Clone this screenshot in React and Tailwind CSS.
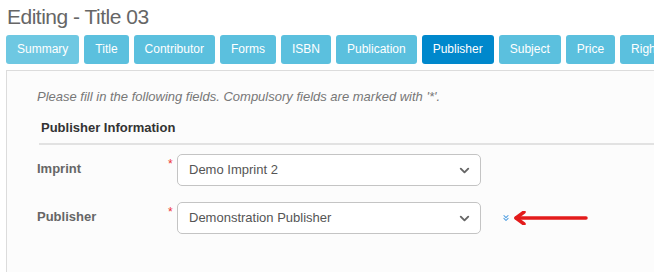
import { ChevronDown, ChevronsDown } from "lucide-react";

const tabs = ["Summary", "Title", "Contributor", "Forms", "ISBN", "Publication", "Publisher", "Subject", "Price", "Rights"];

function Field({ label, value, extra }) {
    return (
        <div className="flex items-start h-[48px]">
            <div className="w-[131px] pt-[6px] text-[13px] font-bold text-[#666] leading-[18px]">{label}</div>
            <div className="w-[9px] text-[12px] text-[#e33] leading-none pt-[4px]">*</div>
            <div className="relative w-[304px] h-[32px] rounded-[5px] border border-[#c4c4c4] bg-white">
                <div className="pl-[11px] leading-[30px] text-[13px] text-[#555]">{value}</div>
                <ChevronDown className="absolute right-[8px] top-[8px] text-[#666]" size={15} strokeWidth={3} />
            </div>
            {extra}
        </div>
    );
}

export default function App() {
    return (
        <div className="w-[654px] h-[272px] overflow-hidden bg-white pl-[6px]" style={{ fontFamily: '"Liberation Sans", Arial, sans-serif' }}>
            <h1 className="pt-[5px] pl-[1px] text-[21px] leading-[24px] tracking-[-0.5px] text-[#666]">Editing - Title 03</h1>
            <div className="flex gap-[5px] mt-[6px] whitespace-nowrap">
                {tabs.map(tab => (
                    <div key={tab}
                        className={
                            tab === "Publisher"
                                ? "h-[29px] px-[11px] rounded-[3px] bg-[#0088cc] text-white text-[12px] leading-[29px]"
                                : tab === "Summary"
                                    ? "h-[29px] px-[11px] rounded-[3px] bg-[#6ec8e2] text-white text-[12px] leading-[29px]"
                                    : "h-[29px] px-[11px] rounded-[3px] bg-[#5bc0de] text-white text-[12px] leading-[29px]"
                        }>
                        {tab}
                    </div>
                ))}
            </div>
            <div className="mt-[6px] w-[700px] h-[210px] border-l border-t border-[#dcdcdc] bg-[#fcfcfc] pl-[30px] pt-[17px]">
                <p className="text-[13px] italic text-[#777] leading-[18px]">
                    Please fill in the following fields. Compulsory fields are marked with '*'.
                </p>
                <div className="mt-[13px] ml-[2px] border-b-2 border-[#e2e2e2] pl-[2px] pb-[6px] text-[13px] font-bold text-[#333] leading-[18px]">
                    Publisher Information
                </div>
                <div className="mt-[9px]">
                    <Field label="Imprint" value="Demo Imprint 2" />
                    <Field label="Publisher" value="Demonstration Publisher"
                        extra={
                            <div className="flex items-center h-[32px] ml-[20px] gap-[2px]">
                                <ChevronsDown className="text-[#4a9be0]" size={10} strokeWidth={2.5} />
                                <svg width="76" height="14" viewBox="0 0 76 14">
                                    <path d="M3 7 L73 7" stroke="#e31b1b" strokeWidth="3.5" strokeLinecap="round" fill="none" />
                                    <path d="M11 1 L3 7 L11 13" stroke="#e31b1b" strokeWidth="3.5" strokeLinecap="round" strokeLinejoin="round" fill="none" />
                                </svg>
                            </div>
                        } />
                </div>
            </div>
        </div>
    );
}
